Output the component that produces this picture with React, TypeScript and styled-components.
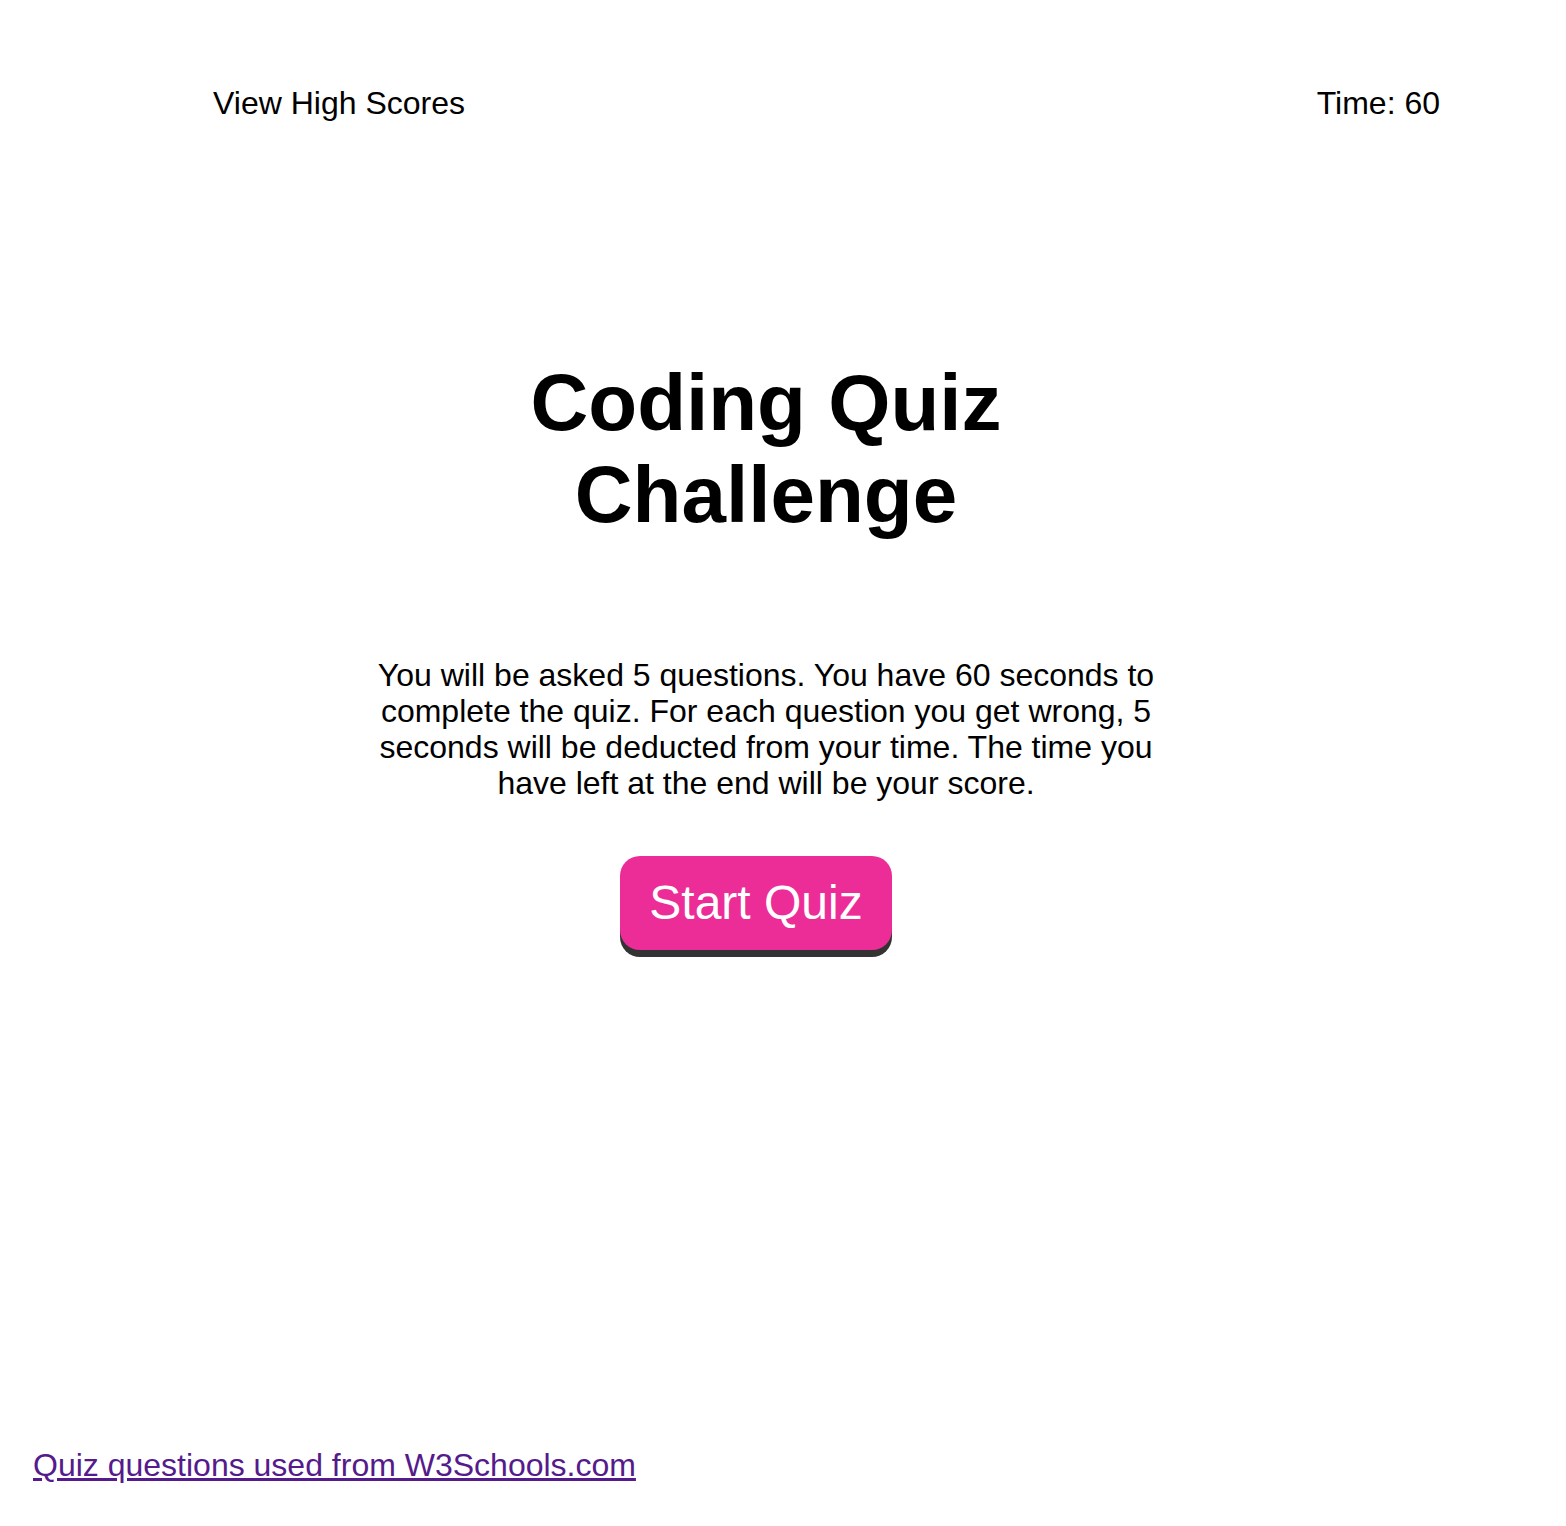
import React from "react";
import styled, { createGlobalStyle } from "styled-components";

const GlobalStyle = createGlobalStyle`
  html, body { margin: 0; padding: 0; background: #ffffff; }
  body { font-family: "Liberation Sans", Arial, sans-serif; color: #000; }
`;

const Page = styled.div`
  min-height: 1526px;
  display: flex;
  flex-direction: column;
  box-sizing: border-box;
`;

const Header = styled.header`
  display: flex;
  justify-content: space-between;
  align-items: center;
  padding: 85px 126px 0 213px;
  font-size: 32px;
`;

const HeaderItem = styled.div`
  line-height: 37px;
`;

const Main = styled.main`
  display: flex;
  flex-direction: column;
  align-items: center;
  padding-right: 34px;
  flex: 1;
`;

const Title = styled.h1`
  margin: 235px 0 0;
  max-width: 600px;
  text-align: center;
  font-size: 80px;
  line-height: 92px;
  font-weight: 700;
`;

const Intro = styled.p`
  margin: 116px 0 0;
  max-width: 800px;
  text-align: center;
  font-size: 32px;
  line-height: 36px;
`;

const StartButton = styled.button`
  margin: 55px 20px 0 0;
  padding: 20px 29px;
  font-family: "Liberation Sans", Arial, sans-serif;
  font-size: 48px;
  line-height: 54px;
  color: #ffffff;
  background: #ec2c97;
  border: none;
  border-radius: 20px;
  box-shadow: 0 7px 0 #333333;
  cursor: pointer;
`;

const Footer = styled.footer`
  padding: 0 0 43px 33px;
  font-size: 32px;
  line-height: 36px;
`;

const SourceLink = styled.a`
  color: #551a8b;
  text-decoration: underline;
`;

export default function App() {
  return (
    <>
      <GlobalStyle />
      <Page>
        <Header>
          <HeaderItem>View High Scores</HeaderItem>
          <HeaderItem>Time: 60</HeaderItem>
        </Header>
        <Main>
          <Title>Coding Quiz Challenge</Title>
          <Intro>
            You will be asked 5 questions. You have 60 seconds to complete the
            quiz. For each question you get wrong, 5 seconds will be deducted
            from your time. The time you have left at the end will be your
            score.
          </Intro>
          <StartButton>Start Quiz</StartButton>
        </Main>
        <Footer>
          <SourceLink href="#">Quiz questions used from W3Schools.com</SourceLink>
        </Footer>
      </Page>
    </>
  );
}
